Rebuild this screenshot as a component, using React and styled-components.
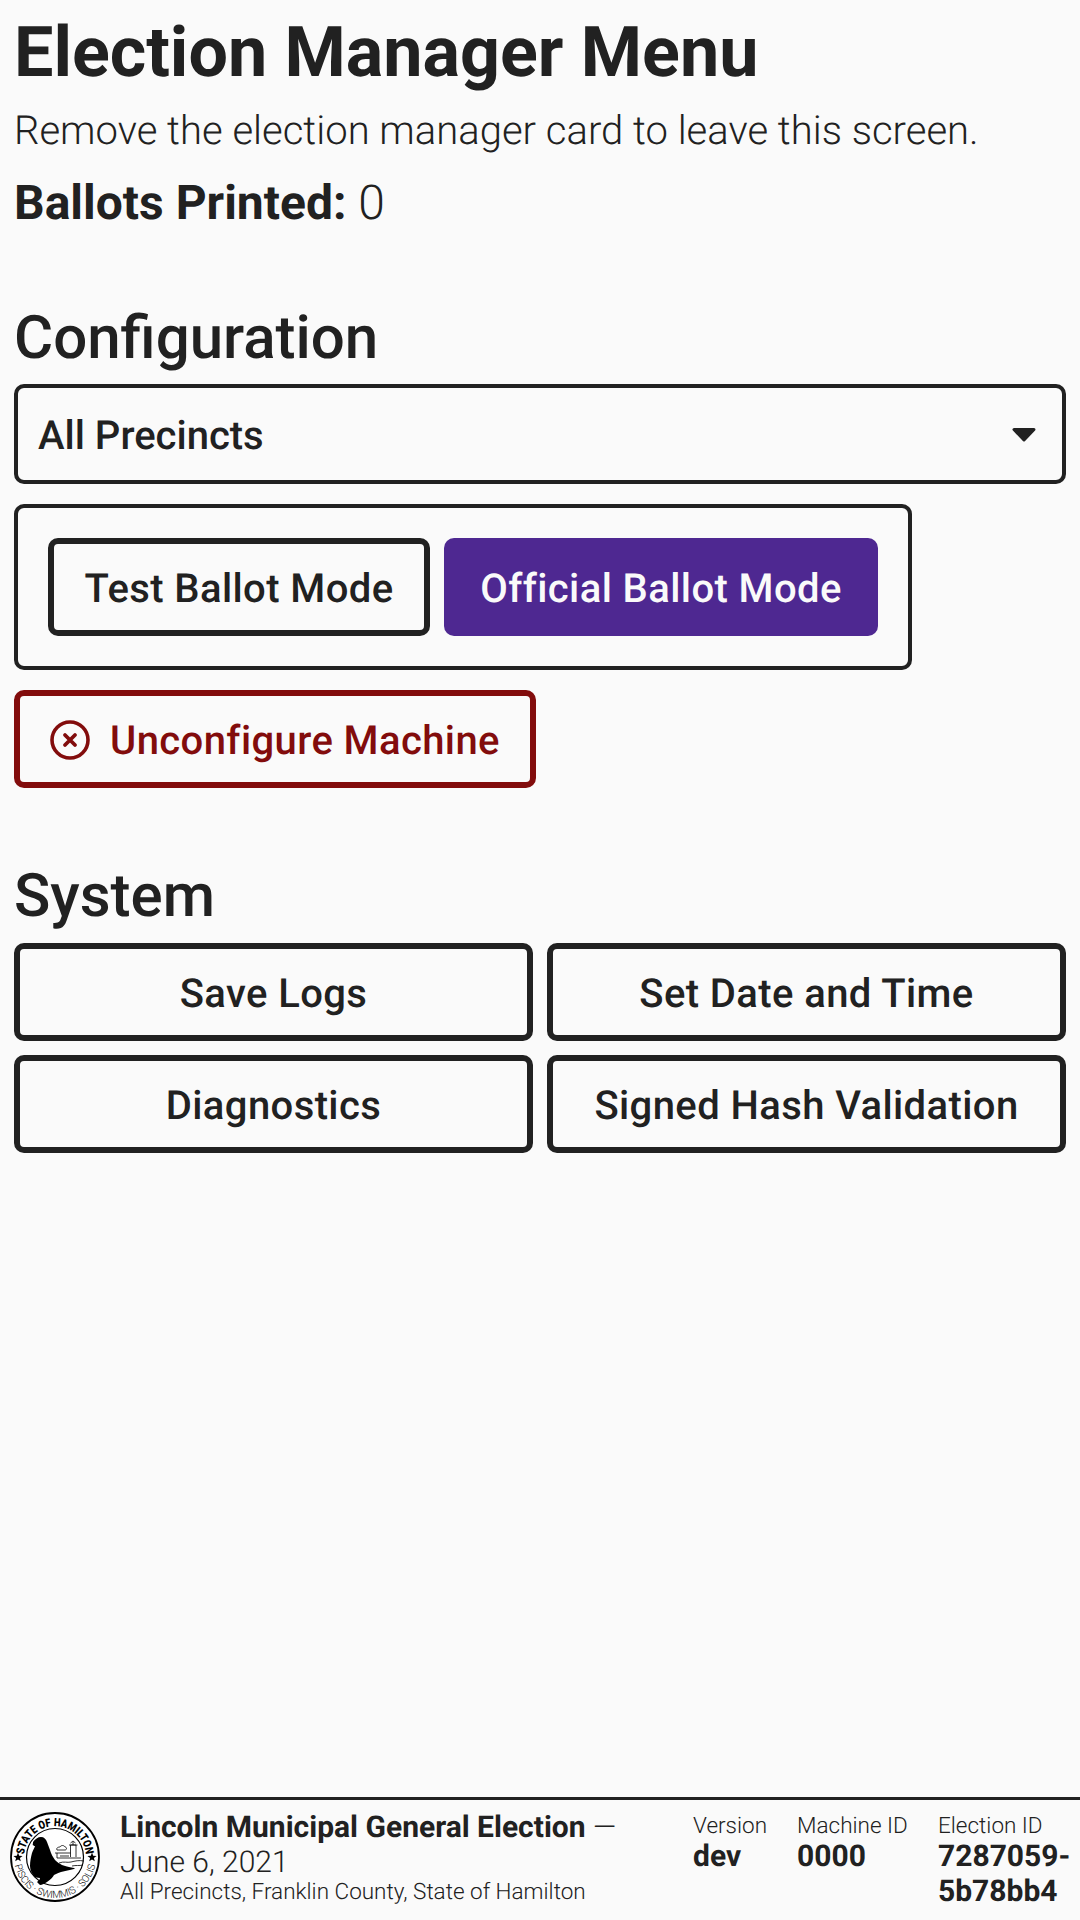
import React from 'react';
import styled, { createGlobalStyle } from 'styled-components';

const GlobalStyle = createGlobalStyle`
  html, body {
    margin: 0;
    padding: 0;
    background: #fafafa;
    color: #212121;
    font-family: Roboto, "Liberation Sans", sans-serif;
    text-rendering: geometricPrecision;
  }
  * { box-sizing: border-box; }
`;

const Screen = styled.div`
  width: 1080px;
  height: 1920px;
  display: flex;
  flex-direction: column;
  background: #fafafa;
`;

const Main = styled.main`
  flex: 1;
  padding: 13px 14px 0;
`;

const Title = styled.h1`
  margin: 0;
  font-size: 70px;
  line-height: 80px;
  font-weight: 700;
`;

const Lead = styled.p`
  margin: 11px 0 0;
  font-size: 40px;
  line-height: 54px;
  font-weight: 300;
`;

const Printed = styled.p`
  margin: 18px 0 0;
  font-size: 48px;
  line-height: 54px;
  font-weight: 300;
  strong { font-weight: 700; }
`;

const SectionTitle = styled.h2`
  margin: ${(p) => p.$top}px 0 ${(p) => p.$bottom}px;
  font-size: 60px;
  line-height: 68px;
  font-weight: 500;
`;

const SelectBox = styled.div`
  height: 100px;
  border: 4px solid #212121;
  border-radius: 10px;
  padding: 2px 25px 0 20px;
  display: flex;
  align-items: center;
  justify-content: space-between;
  font-size: 40px;
  font-weight: 500;
`;

const SegmentBox = styled.div`
  width: 898px;
  margin-top: 20px;
  padding: 30px;
  border: 4px solid #212121;
  border-radius: 10px;
  display: flex;
  gap: 14px;
`;

const Button = styled.div`
  height: 98px;
  width: ${(p) => (p.$width ? `${p.$width}px` : 'auto')};
  padding-top: 2px;
  display: flex;
  align-items: center;
  justify-content: center;
  gap: 20px;
  border: ${(p) => (p.$primary ? 'none' : `6px solid ${p.$danger ? '#820c0c' : '#212121'}`)};
  border-radius: 10px;
  background: ${(p) => (p.$primary ? '#4e2891' : 'transparent')};
  color: ${(p) => (p.$primary ? '#fafafa' : p.$danger ? '#820c0c' : '#212121')};
  font-size: 40px;
  font-weight: 500;
  letter-spacing: 0.4px;
`;

const DangerRow = styled.div`
  margin-top: 20px;
`;

const ButtonGrid = styled.div`
  display: grid;
  grid-template-columns: 1fr 1fr;
  gap: 14px;
`;

const Footer = styled.footer`
  height: 123px;
  border-top: 3px solid #212121;
  display: flex;
  padding: 12px 10px 0;
`;

const Seal = styled.svg`
  width: 90px;
  height: 90px;
  flex-shrink: 0;
`;

const ElectionInfo = styled.div`
  width: 510px;
  margin-left: 20px;
  margin-top: -2px;
  font-weight: 300;
`;

const ElectionTitle = styled.div`
  font-size: 30px;
  line-height: 35px;
  strong { font-weight: 700; }
`;

const ElectionPlace = styled.div`
  font-size: 22.5px;
  line-height: 25px;
`;

const Meta = styled.div`
  margin-left: ${(p) => p.$left}px;
  margin-top: 1px;
  width: ${(p) => p.$width}px;
`;

const MetaLabel = styled.div`
  font-size: 22.5px;
  line-height: 26px;
  font-weight: 300;
`;

const MetaValue = styled.div`
  font-size: 30px;
  line-height: 35px;
  font-weight: 700;
`;

const Caret = () => (
  <svg width="26" height="16" viewBox="0 0 26 16">
    <path d="M3 2.5h20L13 13z" fill="#212121" stroke="#212121" strokeWidth="3" strokeLinejoin="round" />
  </svg>
);

const CircleX = () => (
  <svg width="40" height="40" viewBox="0 0 40 40" fill="none" stroke="#820c0c">
    <circle cx="20" cy="20" r="18" strokeWidth="3.6" />
    <path d="M15 15l10 10M25 15L15 25" strokeWidth="3.8" strokeLinecap="round" />
  </svg>
);

const StateSeal = () => (
  <Seal viewBox="0 0 90 90">
    <defs>
      <path id="sealTop" d="M15 53A31 31 0 1 1 75 53" />
      <path id="sealBottom" d="M4 45A41 41 0 0 0 86 45" />
    </defs>
    <circle cx="45" cy="45" r="44" fill="#fff" stroke="#000" strokeWidth="1.8" />
    <circle cx="45" cy="45" r="28.5" fill="#fff" stroke="#000" strokeWidth="1.2" />
    <text fontFamily="Roboto, sans-serif" fontSize="11.5" fontWeight="900" fill="#000">
      <textPath href="#sealTop" startOffset="50%" textAnchor="middle" textLength="92" lengthAdjust="spacingAndGlyphs">STATE OF HAMILTON</textPath>
    </text>
    <text fontFamily="Roboto, sans-serif" fontSize="10" fontWeight="300" fill="#000">
      <textPath href="#sealBottom" startOffset="50%" textAnchor="middle" textLength="112" lengthAdjust="spacingAndGlyphs">PISCIS · SWIMMIS · SOLIS</textPath>
    </text>
    <path d="M8 40.5l1.2 3.2 3.4.2-2.7 2.1.9 3.3-2.8-1.9-2.8 1.9.9-3.3-2.7-2.1 3.4-.2zM82 40.5l1.2 3.2 3.4.2-2.7 2.1.9 3.3-2.8-1.9-2.8 1.9.9-3.3-2.7-2.1 3.4-.2z" fill="#000" />
    <path
      d="M23 30c2-3 5-5 8-5 3 0 5 2 6 5 1 3 2 5 3 8 1 4 3 7 5 10 2 2 5 4 7 5 3 1 6 2 12 3 1 0 1 1 0 1-4 1-9 2-13 3-3 1-5 2-7 3-1 2-3 4-7 7-2 1-5 3-7 3l-3-3c1-1 3-2 3-4-3 0-5-1-5-1-3-3-5-7-5-11 0-5 1-9 2-13 1-3 3-6 3-7-1 0-3 0-2-3z"
      fill="#000"
    />
    <g fill="none" stroke="#000" strokeWidth="0.8">
      <path d="M60.5 45V33h5.5v12M59 33h8.5M63 33v-3M60.5 31l2.5-2 2.5 2M45 41h15.5M47 41v5M47 46h24M50 44h9" />
      <path d="M47 38c-1-2 1-3 3-3 1-2 4-2 5 0 2 0 2 3 0 3z" />
      <path d="M49 51c5-2 8 0 12-1s8-2 13-1M62 54c4-1 7 0 11-1" />
    </g>
  </Seal>
);

export default function App() {
  return (
    <Screen>
      <GlobalStyle />
      <Main>
        <Title>Election Manager Menu</Title>
        <Lead>Remove the election manager card to leave this screen.</Lead>
        <Printed><strong>Ballots Printed:</strong> 0</Printed>

        <SectionTitle $top={74} $bottom={12}>Configuration</SectionTitle>
        <SelectBox>
          All Precincts
          <Caret />
        </SelectBox>
        <SegmentBox>
          <Button $width={382}>Test Ballot Mode</Button>
          <Button $primary $width={434}>Official Ballot Mode</Button>
        </SegmentBox>
        <DangerRow>
          <Button $danger $width={522}>
            <CircleX />
            Unconfigure Machine
          </Button>
        </DangerRow>

        <SectionTitle $top={74} $bottom={13}>System</SectionTitle>
        <ButtonGrid>
          <Button>Save Logs</Button>
          <Button>Set Date and Time</Button>
          <Button>Diagnostics</Button>
          <Button>Signed Hash Validation</Button>
        </ButtonGrid>
      </Main>

      <Footer>
        <StateSeal />
        <ElectionInfo>
          <ElectionTitle>
            <strong>Lincoln Municipal General Election</strong> — June 6, 2021
          </ElectionTitle>
          <ElectionPlace>All Precincts, Franklin County, State of Hamilton</ElectionPlace>
        </ElectionInfo>
        <Meta $left={63} $width={104}>
          <MetaLabel>Version</MetaLabel>
          <MetaValue>dev</MetaValue>
        </Meta>
        <Meta $left={0} $width={141}>
          <MetaLabel>Machine ID</MetaLabel>
          <MetaValue>0000</MetaValue>
        </Meta>
        <Meta $left={0} $width={130}>
          <MetaLabel>Election ID</MetaLabel>
          <MetaValue>7287059-5b78bb4</MetaValue>
        </Meta>
      </Footer>
    </Screen>
  );
}
